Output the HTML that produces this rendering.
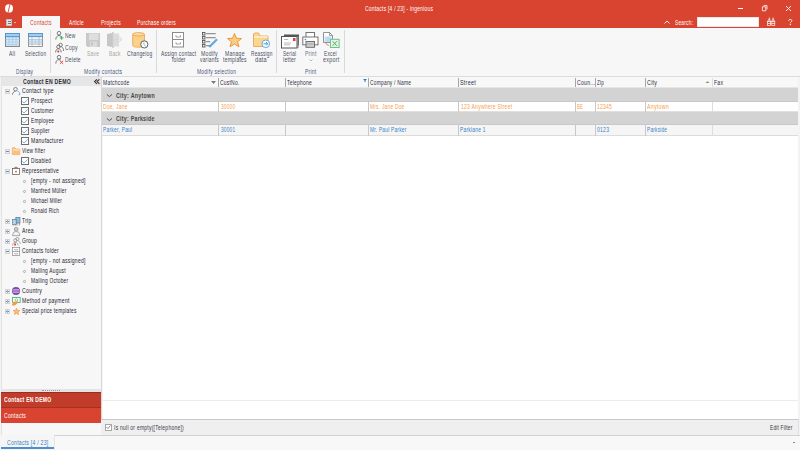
<!DOCTYPE html>
<html><head><meta charset="utf-8">
<style>
*{box-sizing:border-box}
html,body{margin:0;padding:0}
body{width:800px;height:450px;overflow:hidden;position:relative;background:#F5F5F5;font-family:"Liberation Sans",sans-serif}
.a{position:absolute}
.t{position:absolute;white-space:nowrap;transform-origin:0 0}
svg{position:absolute;overflow:visible}
</style></head><body>
<!-- TITLE BAR -->
<div class="a" style="left:0;top:0;width:800px;height:28px;background:#D94430"></div>
<svg style="left:4px;top:3.5px" width="10" height="10" viewBox="0 0 10 10">
  <ellipse cx="5" cy="4.4" rx="4" ry="4.2" fill="#fff"/>
  <path d="M6.1 0.1 L3.9 8.8" stroke="#D94430" stroke-width="0.9"/>
</svg>
<div class="a" style="left:738px;top:8px;width:5px;height:1px;background:#fff"></div>
<svg style="left:761px;top:5px" width="8" height="7" viewBox="0 0 8 7"><path d="M1.4 1.8h3.4v4h-3.4z" fill="none" stroke="#fff" stroke-width="0.8"/><path d="M2.6 0.6H6V4.4" fill="none" stroke="#fff" stroke-width="0.8"/></svg>
<svg style="left:785px;top:5px" width="7" height="7" viewBox="0 0 7 7"><path d="M1 1L6 6M6 1L1 6" stroke="#fff" stroke-width="0.9"/></svg>

<div class="a" style="left:6px;top:19px;width:6px;height:7px;background:#E6E6E6;border:1px solid #BDBDBD"></div>
<div class="a" style="left:8px;top:21px;width:3px;height:1px;background:#777"></div>
<div class="a" style="left:8px;top:23px;width:3px;height:1px;background:#777"></div>
<div class="a" style="left:14px;top:22px;width:1.5px;height:1px;background:#EBB8AE"></div>
<div class="a" style="left:22px;top:16px;width:38px;height:12px;background:#F7F7F7"></div>

<svg style="left:664px;top:20px" width="6" height="4" viewBox="0 0 6 4"><path d="M0.5 3.5L3 1L5.5 3.5" stroke="#fff" fill="none" stroke-width="0.9"/></svg>
<div class="a" style="left:697px;top:17px;width:62px;height:10px;background:#fff;border:1px solid #E8E8E8"></div>
<svg style="left:767px;top:17px" width="9" height="9" viewBox="0 0 9 9"><path d="M2.3 0.6V2.5M6.1 0.6V2.5" stroke="#fff" stroke-width="0.9"/><path d="M1.2 2.8H3.4M5 2.8H7.2M0.5 4.1H8" stroke="#fff" stroke-width="0.8"/><g fill="none" stroke="#fff" stroke-width="0.7"><rect x="0.5" y="4.3" width="3" height="4.2"/><rect x="4.8" y="4.3" width="3" height="4.2"/><path d="M0.5 6.5h3M4.8 6.5h3"/></g></svg>

<svg style="left:788px;top:19px" width="5" height="7" viewBox="0 0 5 7"><path d="M0.7 1.8C0.7 0.9 1.4 0.4 2.2 0.4C3.1 0.4 3.8 1 3.8 1.8C3.8 2.9 2.3 3 2.3 4.3" fill="none" stroke="#fff" stroke-width="1"/><rect x="1.8" y="5" width="1.1" height="1.1" fill="#fff"/></svg>

<!-- RIBBON -->
<div class="a" style="left:0;top:28px;width:800px;height:49px;background:#F7F7F7;border-bottom:1px solid #DCDCDC"></div>
<div class="a" style="left:50px;top:30px;width:1px;height:43px;background:#DADADA"></div>
<div class="a" style="left:156px;top:30px;width:1px;height:43px;background:#DADADA"></div>
<div class="a" style="left:276px;top:30px;width:1px;height:43px;background:#DADADA"></div>
<div class="a" style="left:344px;top:30px;width:1px;height:43px;background:#DADADA"></div>

<!-- All icon -->
<svg style="left:5px;top:33px" width="15" height="14" viewBox="0 0 15 14">
 <rect x="0.5" y="3.5" width="14" height="10" fill="#CDE5F8" stroke="#7A7A7A" stroke-width="0.9"/>
 <path d="M4 3.5v10M7.5 3.5v10M11 3.5v10M0.5 6.5h14M0.5 9h14M0.5 11.5h14" stroke="#A6C4DE" stroke-width="0.6"/>
 <rect x="0.5" y="0.5" width="14" height="3.2" fill="#A3CDF0" stroke="#4A90D0" stroke-width="0.9"/>
</svg>
<!-- Selection icon -->
<svg style="left:27.5px;top:33px" width="15" height="14" viewBox="0 0 15 14">
 <rect x="0.5" y="3.5" width="14" height="10" fill="#fff" stroke="#8A8A8A" stroke-width="0.9"/>
 <rect x="1" y="6.3" width="13" height="5" fill="#CDE5F8"/>
 <path d="M4 3.5v10M11 3.5v10M0.5 6.3h14M0.5 11.3h14" stroke="#A8A8A8" stroke-width="0.6"/>
 <path d="M7.5 6.3v5M0.5 8.8h14" stroke="#A6C4DE" stroke-width="0.5"/>
 <rect x="0.5" y="0.5" width="14" height="3.2" fill="#A3CDF0" stroke="#4A90D0" stroke-width="0.9"/>
</svg>
<!-- New -->
<svg style="left:54.5px;top:31px" width="10" height="9" viewBox="0 0 10 9">
 <g fill="none" stroke="#555" stroke-width="0.75"><circle cx="4" cy="2.2" r="1.8"/><path d="M0.8 8.6C0.8 6 2.2 4.6 4 4.6C5.2 4.6 6.2 5.2 6.8 6.2"/></g>
 <path d="M6.6 5v3.8M4.7 6.9h3.8" stroke="#3CB055" stroke-width="1"/>
</svg>
<!-- Copy -->
<svg style="left:54.5px;top:42.5px" width="10" height="10" viewBox="0 0 10 10">
 <g fill="none" stroke="#555" stroke-width="0.75"><circle cx="5.6" cy="2" r="1.7"/><path d="M6.5 4C7.8 4.4 8.6 5.8 8.6 8"/><circle cx="3.4" cy="3.8" r="1.7"/><path d="M0.6 9.4C0.6 7.2 1.8 5.8 3.4 5.8C5 5.8 6.2 7.2 6.2 9.4"/></g>
 <rect x="2.4" y="7.6" width="1.8" height="1.8" fill="#D33"/>
</svg>
<!-- Delete -->
<svg style="left:54.5px;top:55px" width="10" height="9" viewBox="0 0 10 9">
 <g fill="none" stroke="#555" stroke-width="0.75"><circle cx="4" cy="2.2" r="1.8"/><path d="M0.8 8.6C0.8 6 2.2 4.6 4 4.6C4.8 4.6 5.5 4.9 6 5.3"/></g>
 <path d="M4.9 5.8L8.2 8.9M8.2 5.8L4.9 8.9" stroke="#E53935" stroke-width="0.9"/>
</svg>
<!-- Save -->
<svg style="left:86px;top:33px" width="15" height="14" viewBox="0 0 15 14">
 <path d="M0 0H14V14H1.5L0 12.5Z" fill="#C9C9C9"/>
 <rect x="3" y="0.5" width="9.5" height="6.5" fill="#DEDEDE"/>
 <rect x="4" y="8.5" width="7" height="5.5" fill="#DCDCDC"/>
 <rect x="5.2" y="9.5" width="1.5" height="3" fill="#BBB"/>
</svg>
<!-- Back -->
<svg style="left:107px;top:32px" width="16" height="16" viewBox="0 0 16 16">
 <path d="M0 2L5.5 1V15L0 14Z" fill="#C6C6C6"/>
 <rect x="5.5" y="0" width="1" height="16" fill="#B5B5B5"/>
 <rect x="6.5" y="1.5" width="5.5" height="13" fill="#DCDCDC"/>
 <path d="M12 4.5L15 7.3L12 10" fill="none" stroke="#CFCFCF" stroke-width="0.8"/>
 <path d="M7 7.3h7" stroke="#CFCFCF" stroke-width="0.6"/>
</svg>
<!-- Changelog -->
<svg style="left:131.5px;top:31.5px" width="18" height="17" viewBox="0 0 18 17">
 <path d="M0.7 2.3V13.3C0.7 14.6 3.3 15.2 6.6 15.2C9.9 15.2 12.5 14.6 12.5 13.3V2.3" fill="#F8D28A" stroke="#F0A454" stroke-width="0.9"/>
 <ellipse cx="6.6" cy="2.3" rx="5.9" ry="1.7" fill="#F9DCA0" stroke="#F0A454" stroke-width="0.9"/>
 <circle cx="12.3" cy="12.4" r="3.6" fill="#fff" stroke="#505050" stroke-width="0.9"/>
 <path d="M11.9 10.3V12.7L13.5 14" fill="none" stroke="#5EA8E0" stroke-width="0.8"/>
</svg>
<!-- Assign contact folder -->
<svg style="left:172px;top:32px" width="12" height="16" viewBox="0 0 12 16">
 <rect x="0.5" y="0.5" width="11" height="14.5" fill="#fff" stroke="#8A8A8A"/>
 <path d="M0.5 7.5h11" stroke="#8A8A8A"/>
 <path d="M4 3.2v1.8h4.5v-1.8M4 10.2v1.8h4.5v-1.8" fill="none" stroke="#8A8A8A" stroke-width="0.8"/>
</svg>
<!-- Modify variants -->
<svg style="left:201px;top:32px" width="18" height="16" viewBox="0 0 18 16">
 <g fill="#EEE" stroke="#4A4A4A" stroke-width="0.8"><rect x="1.4" y="0.4" width="2.6" height="2.6"/><rect x="1.4" y="4.4" width="2.6" height="2.6"/><rect x="1.4" y="8.4" width="2.6" height="2.6"/><rect x="1.4" y="12.4" width="2.6" height="2.6"/></g>
 <path d="M5.2 1.7h9.5M5.2 5.7h9.5M5.2 9.7h4M5.2 13.7h3" stroke="#5A5A5A" stroke-width="0.8"/>
 <path d="M8.3 15L16 7.3" stroke="#62AAE6" stroke-width="2.2"/>
 <path d="M8.3 15L9 13.2" stroke="#3D7FC0" stroke-width="0.6"/>
</svg>
<!-- Manage templates star -->
<svg style="left:227px;top:33px" width="16" height="15" viewBox="0 0 16 15">
 <path d="M7.5 0.5L9.5 5.3L14.5 5.5L10.6 8.8L12 13.8L7.5 11L3 13.8L4.4 8.8L0.5 5.5L5.5 5.3Z" fill="#F7CF80" stroke="#F08A34" stroke-width="0.9" stroke-linejoin="round"/>
</svg>
<!-- Reassign data -->
<svg style="left:253px;top:32px" width="18" height="16" viewBox="0 0 18 16">
 <path d="M0.5 2V14.5H15V4H7L5.5 1H1.5Z" fill="#F8D78E" stroke="#F0A05C" stroke-width="0.9"/>
 <path d="M1 4H14.5V6H1Z" fill="#FBE9C6"/>
 <circle cx="12.8" cy="11.8" r="3.8" fill="#fff" stroke="#4FA3E0" stroke-width="0.9"/>
 <path d="M10.5 11.8h4.3M13 10L14.8 11.8L13 13.6" fill="none" stroke="#3D8FD1" stroke-width="0.9"/>
</svg>
<!-- Serial letter -->
<svg style="left:280.8px;top:33.5px" width="19" height="15" viewBox="0 0 19 15">
 <path d="M3 0.5H18V11.5H16V2.5H3Z" fill="#555"/>
 <rect x="0.5" y="2.5" width="15.5" height="11.5" fill="#fff" stroke="#555" stroke-width="1"/>
 <rect x="16" y="2.5" width="1.5" height="11.5" fill="#888"/>
 <rect x="12" y="4" width="2.5" height="3" fill="#E53935"/>
 <path d="M3 5.5h4M3 9h7M3 10.8h6" stroke="#AAA" stroke-width="0.8"/>
</svg>
<!-- Print -->
<svg style="left:302px;top:32px" width="17" height="16" viewBox="0 0 17 16">
 <rect x="4" y="0.5" width="8.5" height="5" fill="#fff" stroke="#666" stroke-width="0.9"/>
 <rect x="0.8" y="5" width="15.2" height="7.8" fill="#fff" stroke="#666" stroke-width="0.9"/>
 <circle cx="3.4" cy="7.6" r="0.8" fill="#3D8FD1"/>
 <rect x="4" y="9.5" width="8.5" height="5.8" fill="#CFCFCF" stroke="#666" stroke-width="0.9"/>
 <path d="M5 12h6.5" stroke="#999" stroke-width="0.8"/>
</svg>
<!-- Excel export -->
<svg style="left:323px;top:32px" width="17" height="16" viewBox="0 0 17 16">
 <path d="M0.5 0.5H6.5L9.5 3.5V10.5H0.5Z" fill="#fff" stroke="#7A7A7A" stroke-width="0.8"/>
 <path d="M6.5 0.5V3.5H9.5" fill="none" stroke="#7A7A7A" stroke-width="0.7"/>
 <rect x="1.5" y="4.5" width="7" height="5.5" fill="#C6E0F5"/>
 <path d="M5 4.5v5.5" stroke="#9CC3E6" stroke-width="0.6"/>
 <path d="M2.6 10.8L3.6 12.3L3 12.8M4.6 12.2L5.4 14" stroke="#EF6A6A" stroke-width="0.9" fill="none"/>
 <rect x="7.4" y="7.3" width="8.7" height="8.2" fill="#E4F4E8" stroke="#6CC486" stroke-width="1"/>
 <path d="M9.6 9.2L13.9 13.8M13.9 9.2L9.6 13.8" stroke="#4DB26A" stroke-width="1"/>
</svg>
<svg style="left:309px;top:58.5px" width="4" height="3" viewBox="0 0 4 3"><path d="M0.5 0.5L2 2L3.5 0.5" fill="none" stroke="#9AA0AA" stroke-width="0.7"/></svg>

<!-- PANEL -->
<div class="a" style="left:0;top:77px;width:101px;height:358px;background:#F7F7F7;border-left:1px solid #F2F2F2"></div>
<div class="a" style="left:1px;top:77px;width:1px;height:358px;background:#E3E3E3"></div>
<div class="a" style="left:1px;top:77px;width:100px;height:9px;background:#E6E6E6"></div>
<svg style="left:94px;top:78.5px" width="6" height="6" viewBox="0 0 6 6"><path d="M2.9 0.4L0.6 2.6L2.9 4.8M5.4 0.4L3.1 2.6L5.4 4.8" fill="none" stroke="#2A2A2A" stroke-width="1.1"/></svg>
<div class="a" style="left:5px;top:89px;width:5px;height:5px;border:1px solid #D2D2D2;background:#F2F2F2"></div><div class="a" style="left:6px;top:91px;width:3px;height:1px;background:#6F87B8"></div>
<svg style="left:12px;top:87px" width="9" height="8" viewBox="0 0 9 8"><g fill="none" stroke="#555" stroke-width="0.7"><circle cx="3.5" cy="2.2" r="1.8"/><path d="M0.4 7.8C0.8 5.2 2.2 4.2 3.5 4.2"/></g><path d="M5.5 4.5C7.5 4.5 8.2 6 7.5 7.8M6.5 7.8L7.5 7.8L7.8 6.8" fill="none" stroke="#4A9BE0" stroke-width="0.7"/></svg>
<div class="a" style="left:21px;top:97px;width:8px;height:8px;border:1px solid #707070;background:#FDFDFD"></div><svg style="left:22px;top:99px" width="6" height="5" viewBox="0 0 6 5"><path d="M0.3 2.3L2 4L5.7 0.5" fill="none" stroke="#5AA5E3" stroke-width="0.8"/></svg>
<div class="a" style="left:21px;top:107px;width:8px;height:8px;border:1px solid #707070;background:#FDFDFD"></div><svg style="left:22px;top:109px" width="6" height="5" viewBox="0 0 6 5"><path d="M0.3 2.3L2 4L5.7 0.5" fill="none" stroke="#5AA5E3" stroke-width="0.8"/></svg>
<div class="a" style="left:21px;top:117px;width:8px;height:8px;border:1px solid #707070;background:#FDFDFD"></div><svg style="left:22px;top:119px" width="6" height="5" viewBox="0 0 6 5"><path d="M0.3 2.3L2 4L5.7 0.5" fill="none" stroke="#5AA5E3" stroke-width="0.8"/></svg>
<div class="a" style="left:21px;top:127px;width:8px;height:8px;border:1px solid #707070;background:#FDFDFD"></div><svg style="left:22px;top:129px" width="6" height="5" viewBox="0 0 6 5"><path d="M0.3 2.3L2 4L5.7 0.5" fill="none" stroke="#5AA5E3" stroke-width="0.8"/></svg>
<div class="a" style="left:21px;top:137px;width:8px;height:8px;border:1px solid #707070;background:#FDFDFD"></div><svg style="left:22px;top:139px" width="6" height="5" viewBox="0 0 6 5"><path d="M0.3 2.3L2 4L5.7 0.5" fill="none" stroke="#5AA5E3" stroke-width="0.8"/></svg>
<div class="a" style="left:5px;top:149px;width:5px;height:5px;border:1px solid #D2D2D2;background:#F2F2F2"></div><div class="a" style="left:6px;top:151px;width:3px;height:1px;background:#6F87B8"></div>
<svg style="left:12px;top:147px" width="8" height="8" viewBox="0 0 8 8"><path d="M0.3 1V7.6H7.7V2H3.5L2.7 0.6H0.8Z" fill="#F9C27D" stroke="#F0A05A" stroke-width="0.6"/><rect x="0.6" y="2.3" width="6.8" height="1.2" fill="#FCE3C0"/></svg>
<div class="a" style="left:21px;top:157px;width:8px;height:8px;border:1px solid #707070;background:#FDFDFD"></div><svg style="left:22px;top:159px" width="6" height="5" viewBox="0 0 6 5"><path d="M0.3 2.3L2 4L5.7 0.5" fill="none" stroke="#5AA5E3" stroke-width="0.8"/></svg>
<div class="a" style="left:5px;top:169px;width:5px;height:5px;border:1px solid #D2D2D2;background:#F2F2F2"></div><div class="a" style="left:6px;top:171px;width:3px;height:1px;background:#6F87B8"></div>
<svg style="left:12px;top:167px" width="8" height="8" viewBox="0 0 8 8"><rect x="0.4" y="1.6" width="7.2" height="6" fill="#fff" stroke="#555" stroke-width="0.7"/><path d="M2.8 1.6V0.4H5.2V1.6" fill="none" stroke="#555" stroke-width="0.7"/><rect x="3" y="3.8" width="2" height="1.6" fill="#F07A2A"/></svg>
<svg style="left:23px;top:180px" width="3" height="3" viewBox="0 0 3 3"><circle cx="1.5" cy="1.5" r="1.1" fill="none" stroke="#8A8A8A" stroke-width="0.6"/></svg>
<svg style="left:23px;top:190px" width="3" height="3" viewBox="0 0 3 3"><circle cx="1.5" cy="1.5" r="1.1" fill="none" stroke="#8A8A8A" stroke-width="0.6"/></svg>
<svg style="left:23px;top:200px" width="3" height="3" viewBox="0 0 3 3"><circle cx="1.5" cy="1.5" r="1.1" fill="none" stroke="#8A8A8A" stroke-width="0.6"/></svg>
<svg style="left:23px;top:210px" width="3" height="3" viewBox="0 0 3 3"><circle cx="1.5" cy="1.5" r="1.1" fill="none" stroke="#8A8A8A" stroke-width="0.6"/></svg>
<div class="a" style="left:5px;top:219px;width:5px;height:5px;border:1px solid #D2D2D2;background:#F2F2F2"></div><div class="a" style="left:6px;top:221px;width:3px;height:1px;background:#6F87B8"></div><div class="a" style="left:7px;top:220px;width:1px;height:3px;background:#9FB2D4"></div>
<svg style="left:12px;top:217px" width="9" height="9" viewBox="0 0 9 9"><rect x="3.8" y="0.4" width="4.2" height="5.6" fill="#7EC0EE" stroke="#6A6A6A" stroke-width="0.6"/><rect x="0.6" y="2.4" width="3.6" height="5" fill="#A8D6F6" stroke="#6A6A6A" stroke-width="0.6"/><path d="M1.2 7.4V8.6M3.4 7.4V8.6M5 6V8.6M7.4 6V8.6" stroke="#6A6A6A" stroke-width="0.6"/></svg>
<div class="a" style="left:5px;top:229px;width:5px;height:5px;border:1px solid #D2D2D2;background:#F2F2F2"></div><div class="a" style="left:6px;top:231px;width:3px;height:1px;background:#6F87B8"></div><div class="a" style="left:7px;top:230px;width:1px;height:3px;background:#9FB2D4"></div>
<svg style="left:12px;top:227px" width="9" height="9" viewBox="0 0 9 9"><circle cx="4.2" cy="2.3" r="1.9" fill="#CFCFCF" stroke="#777" stroke-width="0.6"/><path d="M0.5 8.6L1.4 5.6C2 4.9 3 4.6 4.2 4.6C5.4 4.6 6.4 4.9 7 5.6L7.9 8.6Z" fill="#F4F4F4" stroke="#777" stroke-width="0.6"/></svg>
<div class="a" style="left:5px;top:239px;width:5px;height:5px;border:1px solid #D2D2D2;background:#F2F2F2"></div><div class="a" style="left:6px;top:241px;width:3px;height:1px;background:#6F87B8"></div><div class="a" style="left:7px;top:240px;width:1px;height:3px;background:#9FB2D4"></div>
<svg style="left:12px;top:237px" width="9" height="9" viewBox="0 0 9 9"><g fill="none" stroke="#777" stroke-width="0.6"><circle cx="5.4" cy="2" r="1.6"/><circle cx="3.3" cy="3.3" r="1.6"/><path d="M0.5 8.6C0.7 6.6 1.8 5.3 3.3 5.3C4.8 5.3 5.9 6.6 6.1 8.6M5.8 3.8C7.2 4 8.1 5.2 8.3 7"/></g><path d="M2.2 6.6h1.8v2h-1.8z" fill="#D94040"/></svg>
<div class="a" style="left:5px;top:249px;width:5px;height:5px;border:1px solid #D2D2D2;background:#F2F2F2"></div><div class="a" style="left:6px;top:251px;width:3px;height:1px;background:#6F87B8"></div>
<svg style="left:12px;top:247px" width="9" height="9" viewBox="0 0 9 9"><rect x="0.5" y="0.4" width="7.2" height="8.2" fill="#FBFBFB" stroke="#7A7A7A" stroke-width="0.6"/><path d="M0.5 4.5h7.2" stroke="#7A7A7A" stroke-width="0.6"/><path d="M2.8 2v1h2.6V2M2.8 6v1h2.6V6" fill="none" stroke="#7A7A7A" stroke-width="0.5"/></svg>
<svg style="left:23px;top:260px" width="3" height="3" viewBox="0 0 3 3"><circle cx="1.5" cy="1.5" r="1.1" fill="none" stroke="#8A8A8A" stroke-width="0.6"/></svg>
<svg style="left:23px;top:270px" width="3" height="3" viewBox="0 0 3 3"><circle cx="1.5" cy="1.5" r="1.1" fill="none" stroke="#8A8A8A" stroke-width="0.6"/></svg>
<svg style="left:23px;top:280px" width="3" height="3" viewBox="0 0 3 3"><circle cx="1.5" cy="1.5" r="1.1" fill="none" stroke="#8A8A8A" stroke-width="0.6"/></svg>
<div class="a" style="left:5px;top:289px;width:5px;height:5px;border:1px solid #D2D2D2;background:#F2F2F2"></div><div class="a" style="left:6px;top:291px;width:3px;height:1px;background:#6F87B8"></div><div class="a" style="left:7px;top:290px;width:1px;height:3px;background:#9FB2D4"></div>
<svg style="left:12px;top:287px" width="8" height="8" viewBox="0 0 8 8"><circle cx="4" cy="4" r="4" fill="#7C42AC"/><path d="M1 2.6h6M0.4 4h7.2M1 5.4h6" stroke="#F2EAF8" stroke-width="0.6"/><path d="M4 0.5v7" stroke="#B89AD4" stroke-width="0.4"/></svg>
<div class="a" style="left:5px;top:299px;width:5px;height:5px;border:1px solid #D2D2D2;background:#F2F2F2"></div><div class="a" style="left:6px;top:301px;width:3px;height:1px;background:#6F87B8"></div><div class="a" style="left:7px;top:300px;width:1px;height:3px;background:#9FB2D4"></div>
<svg style="left:12px;top:297px" width="9" height="9" viewBox="0 0 9 9"><rect x="0.6" y="0.4" width="7.6" height="5" fill="#fff" stroke="#4DB36A" stroke-width="0.9"/><circle cx="4.4" cy="2.9" r="1.3" fill="none" stroke="#4DB36A" stroke-width="0.6"/><path d="M0 8.4C0 6.5 1 4.8 3 4.4L5.8 4.3C5.8 6 4.6 7.6 2.4 8.6Z" fill="#F59A48"/></svg>
<div class="a" style="left:5px;top:309px;width:5px;height:5px;border:1px solid #D2D2D2;background:#F2F2F2"></div><div class="a" style="left:6px;top:311px;width:3px;height:1px;background:#6F87B8"></div><div class="a" style="left:7px;top:310px;width:1px;height:3px;background:#9FB2D4"></div>
<svg style="left:12.5px;top:308px" width="7" height="7" viewBox="0 0 7 7"><path d="M3.5 0.2L4.4 2.4L6.8 2.5L4.9 4L5.6 6.6L3.5 5.2L1.4 6.6L2.1 4L0.2 2.5L2.6 2.4Z" fill="#F9C27A" stroke="#EF8A3A" stroke-width="0.6" stroke-linejoin="round"/></svg>

<div class="a" style="left:1px;top:389px;width:100px;height:3px;background:#E4E4E4"></div>
<div class="a" style="left:42px;top:390px;width:18px;height:1px;border-top:1px dotted #9A9A9A"></div>
<div class="a" style="left:1px;top:392px;width:100px;height:16px;background:#C13C2A;border-top:1px solid #9C2C1E"></div>
<div class="a" style="left:1px;top:407px;width:100px;height:16px;background:#D94430;border-top:1px solid #A9321F"></div>

<!-- GRID -->
<div class="a" style="left:798px;top:77px;width:2px;height:358px;background:#F3F3F3"></div>
<div class="a" style="left:101px;top:77px;width:697px;height:342px;background:#fff;border-left:1px solid #D8D8D8"></div>
<div class="a" style="left:102px;top:77px;width:696px;height:11px;background:#F8F8F8;border-bottom:1px solid #E6E6E6"></div>
<div class="a" style="left:102px;top:88px;width:696px;height:14px;background:#D3D3D3;border-bottom:1px solid #C8C8C8"></div>
<div class="a" style="left:102px;top:102px;width:696px;height:10px;background:#FFFFFF;border-bottom:1px solid #E0E0E0"></div>
<div class="a" style="left:102px;top:112px;width:696px;height:13px;background:#D3D3D3;border-bottom:1px solid #C8C8C8"></div>
<div class="a" style="left:102px;top:125px;width:696px;height:11px;background:#F5F5F5;border-bottom:1px solid #DCDCDC"></div>
<div class="a" style="left:102px;top:400px;width:696px;height:1px;background:#EDEDED"></div>
<div class="a" style="left:102px;top:136px;width:1px;height:283px;background:#F5F5F5"></div>
<div class="a" style="left:218px;top:78px;width:1px;height:9px;background:#A6A6A6"></div>
<div class="a" style="left:285px;top:78px;width:1px;height:9px;background:#A6A6A6"></div>
<div class="a" style="left:368px;top:78px;width:1px;height:9px;background:#A6A6A6"></div>
<div class="a" style="left:458px;top:78px;width:1px;height:9px;background:#A6A6A6"></div>
<div class="a" style="left:575px;top:78px;width:1px;height:9px;background:#A6A6A6"></div>
<div class="a" style="left:595px;top:78px;width:1px;height:9px;background:#A6A6A6"></div>
<div class="a" style="left:645px;top:78px;width:1px;height:9px;background:#A6A6A6"></div>
<div class="a" style="left:712px;top:78px;width:1px;height:9px;background:#DDDDDD"></div>
<div class="a" style="left:218px;top:102px;width:1px;height:10px;background:#C8C8C8"></div>
<div class="a" style="left:218px;top:125px;width:1px;height:11px;background:#C8C8C8"></div>
<div class="a" style="left:285px;top:102px;width:1px;height:10px;background:#C8C8C8"></div>
<div class="a" style="left:285px;top:125px;width:1px;height:11px;background:#C8C8C8"></div>
<div class="a" style="left:368px;top:102px;width:1px;height:10px;background:#C8C8C8"></div>
<div class="a" style="left:368px;top:125px;width:1px;height:11px;background:#C8C8C8"></div>
<div class="a" style="left:458px;top:102px;width:1px;height:10px;background:#C8C8C8"></div>
<div class="a" style="left:458px;top:125px;width:1px;height:11px;background:#C8C8C8"></div>
<div class="a" style="left:575px;top:102px;width:1px;height:10px;background:#C8C8C8"></div>
<div class="a" style="left:575px;top:125px;width:1px;height:11px;background:#C8C8C8"></div>
<div class="a" style="left:595px;top:102px;width:1px;height:10px;background:#C8C8C8"></div>
<div class="a" style="left:595px;top:125px;width:1px;height:11px;background:#C8C8C8"></div>
<div class="a" style="left:645px;top:102px;width:1px;height:10px;background:#C8C8C8"></div>
<div class="a" style="left:645px;top:125px;width:1px;height:11px;background:#C8C8C8"></div>
<div class="a" style="left:712px;top:102px;width:1px;height:10px;background:#DDDDDD"></div>
<div class="a" style="left:712px;top:125px;width:1px;height:11px;background:#DDDDDD"></div>
<svg style="left:106px;top:94px" width="7" height="4" viewBox="0 0 7 4"><path d="M0.9 0.5L3.4 2.6L5.9 0.5" fill="none" stroke="#4A4A4A" stroke-width="1"/></svg>
<svg style="left:106px;top:118px" width="7" height="4" viewBox="0 0 7 4"><path d="M0.9 0.5L3.4 2.6L5.9 0.5" fill="none" stroke="#4A4A4A" stroke-width="1"/></svg>
<svg style="left:211px;top:81px" width="5" height="3" viewBox="0 0 5 3"><path d="M0 0H5L2.5 3Z" fill="#7A7A7A"/></svg>
<svg style="left:363px;top:79px" width="4" height="3" viewBox="0 0 4 3"><path d="M0 0H4L2.5 1.5V3H1.5V1.5Z" fill="#2F7BC0"/></svg>
<svg style="left:705px;top:81px" width="5" height="2" viewBox="0 0 5 2"><path d="M0.3 2H4.7L2.5 0.2Z" fill="#8E8E8E"/></svg>

<!-- filter bar -->
<div class="a" style="left:101px;top:419px;width:698px;height:16px;background:#EFEFEF;border-top:1px solid #C8C8C8;border-right:1px solid #E0E0E0"></div>
<div class="a" style="left:105px;top:423.5px;width:7px;height:7px;background:#fff;border:1px solid #A8A8A8"></div>
<svg style="left:106px;top:425px" width="5" height="4" viewBox="0 0 5 4"><path d="M0.5 2L2 3.5L4.5 0.5" fill="none" stroke="#666" stroke-width="0.7"/></svg>

<!-- bottom -->
<div class="a" style="left:0;top:435px;width:800px;height:15px;background:#F5F5F5"></div>
<div class="a" style="left:54px;top:435px;width:746px;height:15px;background:#F8F8F8;border-top:1px solid #D2D2D2;border-left:1px solid #E6E6E6"></div>
<div class="a" style="left:1px;top:447px;width:53px;height:2px;background:#4A90D0"></div>
<div class="a" style="left:793px;top:442px;width:2px;height:1px;background:#888"></div>

<div class="t" style="left:365.00px;top:5.88px;font-size:6.4px;letter-spacing:0.3px;line-height:6.4px;color:#fff;transform:scaleX(0.773);">Contacts [4 / 23] - ingenious</div>
<div class="t" style="left:30.00px;top:20.28px;font-size:6.4px;letter-spacing:0.3px;line-height:6.4px;color:#D94430;transform:scaleX(0.787);">Contacts</div>
<div class="t" style="left:68.60px;top:20.28px;font-size:6.4px;letter-spacing:0.3px;line-height:6.4px;color:#fff;transform:scaleX(0.746);">Article</div>
<div class="t" style="left:100.60px;top:20.28px;font-size:6.4px;letter-spacing:0.3px;line-height:6.4px;color:#fff;transform:scaleX(0.782);">Projects</div>
<div class="t" style="left:137.20px;top:20.28px;font-size:6.4px;letter-spacing:0.3px;line-height:6.4px;color:#fff;transform:scaleX(0.759);">Purchase orders</div>
<div class="t" style="left:675.00px;top:20.28px;font-size:6.4px;letter-spacing:0.3px;line-height:6.4px;color:#fff;transform:scaleX(0.756);">Search:</div>
<div class="t" style="left:9.00px;top:50.98px;font-size:6.4px;letter-spacing:0.3px;line-height:6.4px;color:#4A4F62;transform:scaleX(0.778);">All</div>
<div class="t" style="left:25.00px;top:50.98px;font-size:6.4px;letter-spacing:0.3px;line-height:6.4px;color:#4A4F62;transform:scaleX(0.732);">Selection</div>
<div class="t" style="left:16.00px;top:68.78px;font-size:6.4px;letter-spacing:0.3px;line-height:6.4px;color:#4C5A82;transform:scaleX(0.747);">Display</div>
<div class="t" style="left:65.30px;top:32.98px;font-size:6.4px;letter-spacing:0.3px;line-height:6.4px;color:#4A4F62;transform:scaleX(0.769);">New</div>
<div class="t" style="left:65.30px;top:44.98px;font-size:6.4px;letter-spacing:0.3px;line-height:6.4px;color:#4A4F62;transform:scaleX(0.790);">Copy</div>
<div class="t" style="left:65.30px;top:57.08px;font-size:6.4px;letter-spacing:0.3px;line-height:6.4px;color:#4A4F62;transform:scaleX(0.781);">Delete</div>
<div class="t" style="left:87.00px;top:51.08px;font-size:6.4px;letter-spacing:0.3px;line-height:6.4px;color:#ADA595;transform:scaleX(0.775);">Save</div>
<div class="t" style="left:108.70px;top:51.08px;font-size:6.4px;letter-spacing:0.3px;line-height:6.4px;color:#ADA595;transform:scaleX(0.747);">Back</div>
<div class="t" style="left:126.90px;top:51.08px;font-size:6.4px;letter-spacing:0.3px;line-height:6.4px;color:#4A4F62;transform:scaleX(0.753);">Changelog</div>
<div class="t" style="left:84.00px;top:68.78px;font-size:6.4px;letter-spacing:0.3px;line-height:6.4px;color:#4C5A82;transform:scaleX(0.782);">Modify contacts</div>
<div class="t" style="left:160.70px;top:51.08px;font-size:6.4px;letter-spacing:0.3px;line-height:6.4px;color:#4A4F62;transform:scaleX(0.772);">Assign contact</div>
<div class="t" style="left:171.50px;top:57.08px;font-size:6.4px;letter-spacing:0.3px;line-height:6.4px;color:#4A4F62;transform:scaleX(0.772);">folder</div>
<div class="t" style="left:200.70px;top:51.08px;font-size:6.4px;letter-spacing:0.3px;line-height:6.4px;color:#4A4F62;transform:scaleX(0.812);">Modify</div>
<div class="t" style="left:200.00px;top:57.08px;font-size:6.4px;letter-spacing:0.3px;line-height:6.4px;color:#4A4F62;transform:scaleX(0.764);">variants</div>
<div class="t" style="left:224.70px;top:51.08px;font-size:6.4px;letter-spacing:0.3px;line-height:6.4px;color:#4A4F62;transform:scaleX(0.792);">Manage</div>
<div class="t" style="left:223.20px;top:57.08px;font-size:6.4px;letter-spacing:0.3px;line-height:6.4px;color:#4A4F62;transform:scaleX(0.784);">templates</div>
<div class="t" style="left:250.60px;top:51.08px;font-size:6.4px;letter-spacing:0.3px;line-height:6.4px;color:#4A4F62;transform:scaleX(0.744);">Reassign</div>
<div class="t" style="left:255.00px;top:57.08px;font-size:6.4px;letter-spacing:0.3px;line-height:6.4px;color:#4A4F62;transform:scaleX(0.877);">data</div>
<div class="t" style="left:197.00px;top:68.78px;font-size:6.4px;letter-spacing:0.3px;line-height:6.4px;color:#4C5A82;transform:scaleX(0.775);">Modify selection</div>
<div class="t" style="left:282.70px;top:51.08px;font-size:6.4px;letter-spacing:0.3px;line-height:6.4px;color:#4A4F62;transform:scaleX(0.729);">Serial</div>
<div class="t" style="left:282.50px;top:57.08px;font-size:6.4px;letter-spacing:0.3px;line-height:6.4px;color:#4A4F62;transform:scaleX(0.814);">letter</div>
<div class="t" style="left:304.70px;top:51.08px;font-size:6.4px;letter-spacing:0.3px;line-height:6.4px;color:#6A7286;transform:scaleX(0.788);">Print</div>
<div class="t" style="left:324.30px;top:51.08px;font-size:6.4px;letter-spacing:0.3px;line-height:6.4px;color:#4A4F62;transform:scaleX(0.754);">Excel</div>
<div class="t" style="left:323.20px;top:57.08px;font-size:6.4px;letter-spacing:0.3px;line-height:6.4px;color:#4A4F62;transform:scaleX(0.841);">export</div>
<div class="t" style="left:304.50px;top:68.78px;font-size:6.4px;letter-spacing:0.3px;line-height:6.4px;color:#4C5A82;transform:scaleX(0.781);">Print</div>
<div class="t" style="left:22.70px;top:79.38px;font-size:6.4px;letter-spacing:0.3px;line-height:6.4px;color:#2A2D3A;transform:scaleX(0.800);font-weight:bold;">Contact EN DEMO</div>
<div class="t" style="left:22.00px;top:87.87px;font-size:6.3px;letter-spacing:0.3px;line-height:6.3px;color:#1E2130;transform:scaleX(0.818);">Contact type</div>
<div class="t" style="left:31.00px;top:97.87px;font-size:6.3px;letter-spacing:0.3px;line-height:6.3px;color:#1E2130;transform:scaleX(0.783);">Prospect</div>
<div class="t" style="left:31.00px;top:107.87px;font-size:6.3px;letter-spacing:0.3px;line-height:6.3px;color:#1E2130;transform:scaleX(0.765);">Customer</div>
<div class="t" style="left:31.00px;top:117.87px;font-size:6.3px;letter-spacing:0.3px;line-height:6.3px;color:#1E2130;transform:scaleX(0.764);">Employee</div>
<div class="t" style="left:31.00px;top:127.87px;font-size:6.3px;letter-spacing:0.3px;line-height:6.3px;color:#1E2130;transform:scaleX(0.734);">Supplier</div>
<div class="t" style="left:31.00px;top:137.87px;font-size:6.3px;letter-spacing:0.3px;line-height:6.3px;color:#1E2130;transform:scaleX(0.804);">Manufacturer</div>
<div class="t" style="left:22.00px;top:147.87px;font-size:6.3px;letter-spacing:0.3px;line-height:6.3px;color:#1E2130;transform:scaleX(0.762);">View filter</div>
<div class="t" style="left:31.00px;top:157.87px;font-size:6.3px;letter-spacing:0.3px;line-height:6.3px;color:#1E2130;transform:scaleX(0.752);">Disabled</div>
<div class="t" style="left:22.00px;top:167.87px;font-size:6.3px;letter-spacing:0.3px;line-height:6.3px;color:#1E2130;transform:scaleX(0.794);">Representative</div>
<div class="t" style="left:31.25px;top:177.87px;font-size:6.3px;letter-spacing:0.3px;line-height:6.3px;color:#1E2130;transform:scaleX(0.796);">[empty - not assigned]</div>
<div class="t" style="left:31.00px;top:187.87px;font-size:6.3px;letter-spacing:0.3px;line-height:6.3px;color:#1E2130;transform:scaleX(0.768);">Manfred Müller</div>
<div class="t" style="left:31.00px;top:197.87px;font-size:6.3px;letter-spacing:0.3px;line-height:6.3px;color:#1E2130;transform:scaleX(0.729);">Michael Miller</div>
<div class="t" style="left:31.00px;top:207.87px;font-size:6.3px;letter-spacing:0.3px;line-height:6.3px;color:#1E2130;transform:scaleX(0.744);">Ronald Rich</div>
<div class="t" style="left:22.00px;top:217.87px;font-size:6.3px;letter-spacing:0.3px;line-height:6.3px;color:#1E2130;transform:scaleX(0.803);">Trip</div>
<div class="t" style="left:22.00px;top:227.87px;font-size:6.3px;letter-spacing:0.3px;line-height:6.3px;color:#1E2130;transform:scaleX(0.827);">Area</div>
<div class="t" style="left:22.00px;top:237.87px;font-size:6.3px;letter-spacing:0.3px;line-height:6.3px;color:#1E2130;transform:scaleX(0.796);">Group</div>
<div class="t" style="left:22.00px;top:247.87px;font-size:6.3px;letter-spacing:0.3px;line-height:6.3px;color:#1E2130;transform:scaleX(0.789);">Contacts folder</div>
<div class="t" style="left:31.25px;top:257.87px;font-size:6.3px;letter-spacing:0.3px;line-height:6.3px;color:#1E2130;transform:scaleX(0.796);">[empty - not assigned]</div>
<div class="t" style="left:31.00px;top:267.87px;font-size:6.3px;letter-spacing:0.3px;line-height:6.3px;color:#1E2130;transform:scaleX(0.771);">Mailing August</div>
<div class="t" style="left:31.00px;top:277.87px;font-size:6.3px;letter-spacing:0.3px;line-height:6.3px;color:#1E2130;transform:scaleX(0.768);">Mailing October</div>
<div class="t" style="left:22.00px;top:287.87px;font-size:6.3px;letter-spacing:0.3px;line-height:6.3px;color:#1E2130;transform:scaleX(0.834);">Country</div>
<div class="t" style="left:22.00px;top:297.87px;font-size:6.3px;letter-spacing:0.3px;line-height:6.3px;color:#1E2130;transform:scaleX(0.807);">Method of payment</div>
<div class="t" style="left:22.00px;top:307.87px;font-size:6.3px;letter-spacing:0.3px;line-height:6.3px;color:#1E2130;transform:scaleX(0.757);">Special price templates</div>
<div class="t" style="left:4.40px;top:396.87px;font-size:6.3px;letter-spacing:0.3px;line-height:6.3px;color:#fff;transform:scaleX(0.803);font-weight:bold;">Contact EN DEMO</div>
<div class="t" style="left:3.90px;top:412.87px;font-size:6.3px;letter-spacing:0.3px;line-height:6.3px;color:#fff;transform:scaleX(0.813);">Contacts</div>
<div class="t" style="left:102.90px;top:79.57px;font-size:6.3px;letter-spacing:0.3px;line-height:6.3px;color:#2C3044;transform:scaleX(0.789);">Matchcode</div>
<div class="t" style="left:220.00px;top:79.57px;font-size:6.3px;letter-spacing:0.3px;line-height:6.3px;color:#2C3044;transform:scaleX(0.786);">CustNo.</div>
<div class="t" style="left:287.00px;top:79.57px;font-size:6.3px;letter-spacing:0.3px;line-height:6.3px;color:#2C3044;transform:scaleX(0.785);">Telephone</div>
<div class="t" style="left:370.00px;top:79.57px;font-size:6.3px;letter-spacing:0.3px;line-height:6.3px;color:#2C3044;transform:scaleX(0.775);">Company / Name</div>
<div class="t" style="left:460.00px;top:79.57px;font-size:6.3px;letter-spacing:0.3px;line-height:6.3px;color:#2C3044;transform:scaleX(0.857);">Street</div>
<div class="t" style="left:576.70px;top:79.57px;font-size:6.3px;letter-spacing:0.3px;line-height:6.3px;color:#2C3044;transform:scaleX(0.814);">Coun...</div>
<div class="t" style="left:597.30px;top:79.57px;font-size:6.3px;letter-spacing:0.3px;line-height:6.3px;color:#2C3044;transform:scaleX(0.716);">Zip</div>
<div class="t" style="left:646.70px;top:79.57px;font-size:6.3px;letter-spacing:0.3px;line-height:6.3px;color:#2C3044;transform:scaleX(0.851);">City</div>
<div class="t" style="left:713.70px;top:79.57px;font-size:6.3px;letter-spacing:0.3px;line-height:6.3px;color:#2C3044;transform:scaleX(0.810);">Fax</div>
<div class="t" style="left:116.00px;top:92.67px;font-size:6.3px;letter-spacing:0.3px;line-height:6.3px;color:#464646;transform:scaleX(0.847);font-weight:bold;">City: Anytown</div>
<div class="t" style="left:116.00px;top:116.07px;font-size:6.3px;letter-spacing:0.3px;line-height:6.3px;color:#464646;transform:scaleX(0.837);font-weight:bold;">City: Parkside</div>
<div class="t" style="left:102.90px;top:103.57px;font-size:6.3px;letter-spacing:0.3px;line-height:6.3px;color:#F5A04C;transform:scaleX(0.784);">Doe, Jane</div>
<div class="t" style="left:221.00px;top:103.57px;font-size:6.3px;letter-spacing:0.3px;line-height:6.3px;color:#F5A04C;transform:scaleX(0.748);">30000</div>
<div class="t" style="left:370.00px;top:103.57px;font-size:6.3px;letter-spacing:0.3px;line-height:6.3px;color:#F5A04C;transform:scaleX(0.770);">Mrs. Jane Doe</div>
<div class="t" style="left:460.60px;top:103.57px;font-size:6.3px;letter-spacing:0.3px;line-height:6.3px;color:#F5A04C;transform:scaleX(0.800);">123 Anywhere Street</div>
<div class="t" style="left:577.00px;top:103.57px;font-size:6.3px;letter-spacing:0.3px;line-height:6.3px;color:#F5A04C;transform:scaleX(0.690);">BE</div>
<div class="t" style="left:597.30px;top:103.57px;font-size:6.3px;letter-spacing:0.3px;line-height:6.3px;color:#F5A04C;transform:scaleX(0.785);">12345</div>
<div class="t" style="left:647.00px;top:103.57px;font-size:6.3px;letter-spacing:0.3px;line-height:6.3px;color:#F5A04C;transform:scaleX(0.836);">Anytown</div>
<div class="t" style="left:102.90px;top:126.87px;font-size:6.3px;letter-spacing:0.3px;line-height:6.3px;color:#3482C6;transform:scaleX(0.774);">Parker, Paul</div>
<div class="t" style="left:221.00px;top:126.87px;font-size:6.3px;letter-spacing:0.3px;line-height:6.3px;color:#3482C6;transform:scaleX(0.748);">30001</div>
<div class="t" style="left:370.00px;top:126.87px;font-size:6.3px;letter-spacing:0.3px;line-height:6.3px;color:#3482C6;transform:scaleX(0.763);">Mr. Paul Parker</div>
<div class="t" style="left:460.00px;top:126.87px;font-size:6.3px;letter-spacing:0.3px;line-height:6.3px;color:#3482C6;transform:scaleX(0.774);">Parklane 1</div>
<div class="t" style="left:597.30px;top:126.87px;font-size:6.3px;letter-spacing:0.3px;line-height:6.3px;color:#3482C6;transform:scaleX(0.804);">0123</div>
<div class="t" style="left:647.00px;top:126.87px;font-size:6.3px;letter-spacing:0.3px;line-height:6.3px;color:#3482C6;transform:scaleX(0.752);">Parkside</div>
<div class="t" style="left:113.80px;top:424.87px;font-size:6.3px;letter-spacing:0.3px;line-height:6.3px;color:#3A3A4A;transform:scaleX(0.794);">Is null or empty([Telephone])</div>
<div class="t" style="left:770.30px;top:424.67px;font-size:6.3px;letter-spacing:0.3px;line-height:6.3px;color:#333;transform:scaleX(0.753);">Edit Filter</div>
<div class="t" style="left:6.75px;top:439.57px;font-size:6.3px;letter-spacing:0.3px;line-height:6.3px;color:#3482C6;transform:scaleX(0.814);">Contacts [4 / 23]</div>
</body></html>
